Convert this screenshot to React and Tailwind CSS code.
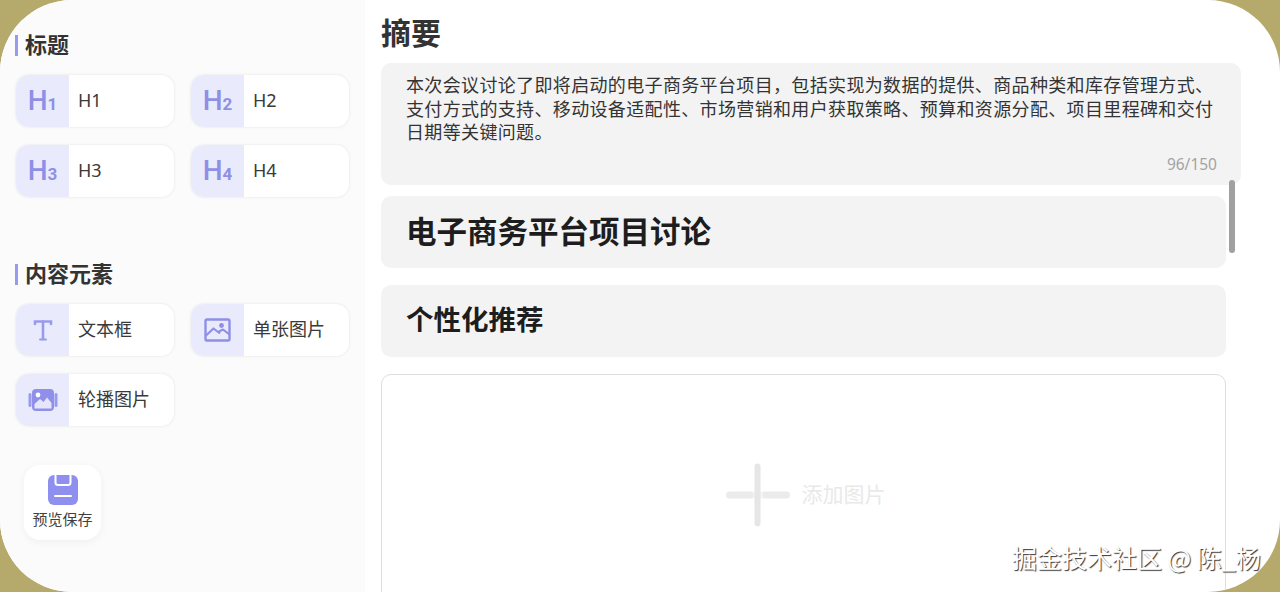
const FONT = "font-['Noto_Sans','Noto_Sans_CJK_SC',sans-serif]";

function HIcon({ n }) {
  return (
    <span className="flex items-baseline font-['Roboto',sans-serif] text-[#8f8fe6]">
      <span className="text-[28px] leading-none font-medium">H</span>
      <span className="text-[17px] leading-none font-bold">{n}</span>
    </span>
  );
}

function TextIcon() {
  return (
    <svg width="24" height="24" viewBox="0 0 24 24" fill="none" stroke="#9a9aec" strokeWidth="2.6" strokeLinecap="round">
      <path d="M4 6V3.5H20V6" />
      <path d="M12 3.5V21" />
      <path d="M9 21.5H15" strokeWidth="2" />
    </svg>
  );
}

function ImageIcon() {
  return (
    <svg width="28" height="24" viewBox="0 0 28 24" fill="none">
      <rect x="1.5" y="1.5" width="24" height="21" rx="1.5" stroke="#8f8fe6" strokeWidth="2.4" />
      <circle cx="17.5" cy="7.5" r="2.4" fill="#8f8fe6" />
      <path d="M2 17.5L9.5 10.5L16 15.5M14 14L19 11.5L25.5 16.5" stroke="#8f8fe6" strokeWidth="2.2" strokeLinejoin="round" />
    </svg>
  );
}

function CarouselIcon() {
  return (
    <svg width="30" height="24" viewBox="0 0 30 24" fill="none">
      <rect x="0.5" y="5" width="3" height="14" rx="1.5" fill="#9a9aec" />
      <rect x="26.5" y="5" width="3" height="14" rx="1.5" fill="#9a9aec" />
      <rect x="4" y="1" width="22" height="22" rx="4" fill="#9090ea" />
      <circle cx="10" cy="7" r="2.4" fill="#fff" />
      <path d="M6.5 20.5V16L12 11L15.5 14L19 9.5L23.5 15V20.5Z" fill="#e6e6fb" />
    </svg>
  );
}

function SaveIcon() {
  return (
    <svg width="32" height="32" viewBox="0 0 32 32" fill="none">
      <rect x="1" y="1" width="30" height="30" rx="6" fill="#8f8ff0" />
      <path d="M8.5 1V8.5C8.5 10 9.5 11 11 11H21C22.5 11 23.5 10 23.5 8.5V1" stroke="#fff" strokeWidth="2" />
      <path d="M8 22H24" stroke="#fff" strokeWidth="2" strokeLinecap="round" />
    </svg>
  );
}

function Tool({ icon, label }) {
  return (
    <div className="flex h-[52px] w-[158px] overflow-hidden rounded-[13px] bg-white shadow-[0_0_3px_rgba(0,0,0,0.1)]">
      <div className="flex w-[53px] shrink-0 items-center justify-center bg-[#e9ebfc]">{icon}</div>
      <div className="flex items-center pb-[2px] pl-[9px] text-[18px] text-[#3a3a3a]">{label}</div>
    </div>
  );
}

function SectionTitle({ children }) {
  return (
    <div className="flex h-[22px] items-center gap-[7px] pl-[15px] text-[22px] leading-none font-bold text-[#333333]">
      <span className="h-[21px] w-[3px] bg-[#9a9aec]" />
      <span className="-translate-y-[1px]">{children}</span>
    </div>
  );
}

export default function App() {
  return (
    <div className={`h-[592px] w-[1280px] overflow-hidden bg-[#b5aa6b] ${FONT}`}>
      <div className="relative flex h-full w-full overflow-hidden rounded-[72px] bg-white">
        <aside className="flex w-[365px] shrink-0 flex-col bg-[#fbfbfc] pt-[34px]">
          <SectionTitle>标题</SectionTitle>
          <div className="mt-[19px] grid grid-cols-[158px_158px] gap-x-[17px] gap-y-[18px] pl-[16px]">
            <Tool icon={<HIcon n="1" />} label="H1" />
            <Tool icon={<HIcon n="2" />} label="H2" />
            <Tool icon={<HIcon n="3" />} label="H3" />
            <Tool icon={<HIcon n="4" />} label="H4" />
          </div>
          <div className="mt-[66px]">
            <SectionTitle>内容元素</SectionTitle>
          </div>
          <div className="mt-[19px] grid grid-cols-[158px_158px] gap-x-[17px] gap-y-[18px] pl-[16px]">
            <Tool icon={<TextIcon />} label="文本框" />
            <Tool icon={<ImageIcon />} label="单张图片" />
            <Tool icon={<CarouselIcon />} label="轮播图片" />
          </div>
          <div className="mt-[39px] ml-[24px] flex h-[75px] w-[77px] flex-col items-center rounded-[16px] bg-white pt-[9px] shadow-[0_2px_8px_rgba(0,0,0,0.05)]">
            <SaveIcon />
            <span className="mt-[3px] text-[15px] leading-[20px] text-[#3f3f3f]">预览保存</span>
          </div>
        </aside>
        <main className="relative flex min-w-0 flex-1 flex-col overflow-hidden pt-[16px] pl-[16px]">
          <h1 className="h-[34px] shrink-0 text-[30px] leading-[34px] font-bold text-[#333333]">摘要</h1>
          <div className="mt-[13px] flex h-[122px] w-[860px] shrink-0 flex-col rounded-[10px] bg-[#f3f3f3] pt-[11px] pr-[24px] pl-[25px]">
            <p className="text-[18px] leading-[23.5px] tracking-[0.35px] text-[#333333]">
              本次会议讨论了即将启动的电子商务平台项目，包括实现为数据的提供、商品种类和库存管理方式、支付方式的支持、移动设备适配性、市场营销和用户获取策略、预算和资源分配、项目里程碑和交付日期等关键问题。
            </p>
            <div className="mt-auto pb-[12px] text-right text-[15.5px] leading-[18px] text-[#a3a3a3]">96/150</div>
          </div>
          <div className="mt-[11px] flex h-[72px] w-[845px] shrink-0 items-center rounded-[10px] bg-[#f3f3f3] pl-[25px] text-[30.5px] font-bold text-[#1d1d1d]">
            电子商务平台项目讨论
          </div>
          <div className="mt-[17px] flex h-[72px] w-[845px] shrink-0 items-center rounded-[10px] bg-[#f3f3f3] pb-[2px] pl-[25px] text-[27.5px] font-bold text-[#1d1d1d]">
            个性化推荐
          </div>
          <div className="mt-[17px] flex h-[242px] w-[845px] shrink-0 items-center justify-center gap-[12px] rounded-[10px] border border-[#dedede] pl-[4px]">
            <svg width="64" height="64" viewBox="0 0 64 64" fill="none" strokeWidth="7" strokeLinecap="round">
              <path d="M24 32H39" stroke="#f4f4f4" strokeLinecap="butt" />
              <path d="M3.5 32H24" stroke="#ebebeb" />
              <path d="M40 32H60.5" stroke="#ebebeb" />
              <path d="M31.5 3.5V60.5" stroke="#e6e6e6" strokeWidth="6" />
            </svg>
            <span className="text-[21px] text-[#e9e9e9]">添加图片</span>
          </div>
          <div className="absolute top-[180px] left-[864px] h-[73px] w-[6px] rounded-full bg-[#a0a0a0]" />
        </main>
        <div className="absolute top-[541px] left-[1012px] font-['Noto_Sans_CJK_SC',sans-serif] text-[25px] leading-[32px] whitespace-nowrap text-white [text-shadow:1px_1px_1px_#333]">
          掘金技术社区 @ 陈_杨
        </div>
      </div>
    </div>
  );
}
